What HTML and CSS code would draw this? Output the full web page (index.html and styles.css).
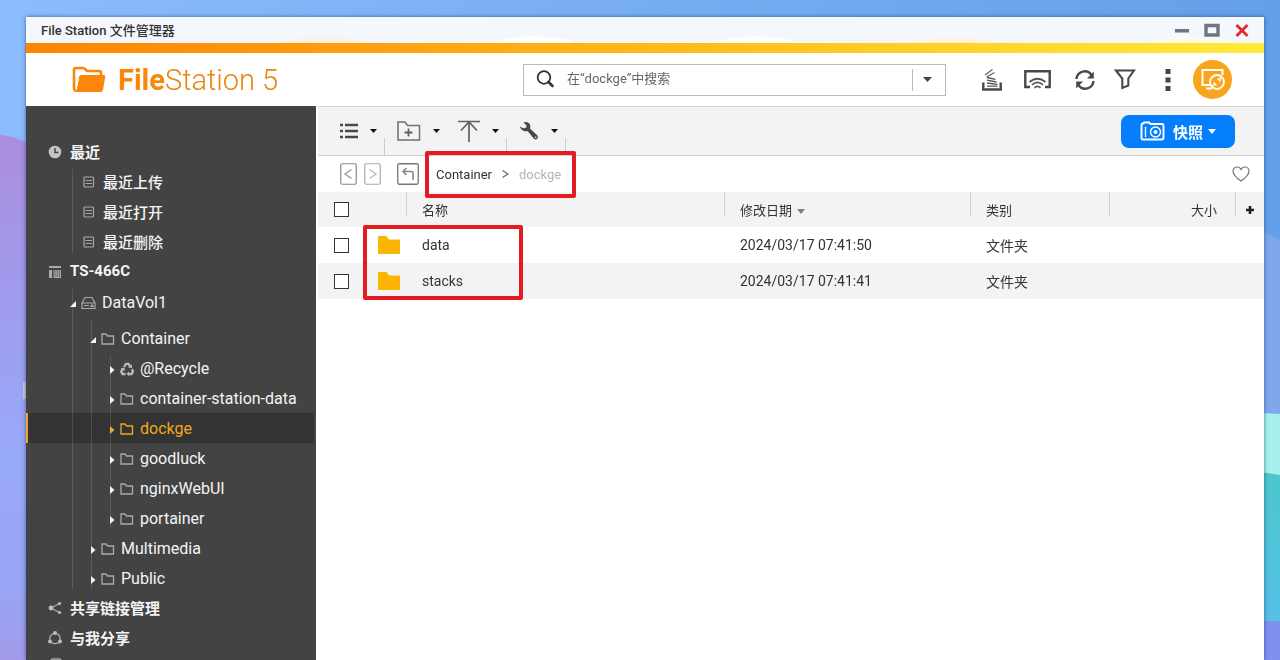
FILE: index.html
```html
<!DOCTYPE html>
<html lang="zh-CN">
<head>
<meta charset="utf-8">
<title>File Station 文件管理器</title>
<link rel="stylesheet" href="styles.css">
</head>
<body>
<svg class="wallpaper" viewBox="0 0 1280 660" preserveAspectRatio="none" aria-hidden="true">
  <defs>
    <linearGradient id="sky"><stop offset="0" stop-color="#8bbcfb"/><stop offset="1" stop-color="#649fe9"/></linearGradient>
    <linearGradient id="violet" x1="0" y1="0" x2="0" y2="1"><stop offset="0" stop-color="#ab8ddd"/><stop offset=".3" stop-color="#a09bed"/><stop offset=".6" stop-color="#98a9f8"/><stop offset=".85" stop-color="#97a6f5"/><stop offset="1" stop-color="#a39bea"/></linearGradient>
    <linearGradient id="teal" x1="0" y1="0" x2="0" y2="1"><stop offset="0" stop-color="#4cc7cb"/><stop offset="1" stop-color="#55c0e8"/></linearGradient>
  </defs>
  <rect width="1280" height="660" fill="url(#sky)"/>
  <path d="M0 135Q14 136 30 144V660H0z" fill="url(#violet)"/>
  <path d="M1260 230L1280 240V420H1260z" fill="#7ea8e9"/>
  <path d="M1260 413L1280 414V480H1260z" fill="#a6f0ee"/>
  <path d="M1260 472L1280 475V630H1260z" fill="url(#teal)"/>
  <path d="M1260 621H1280V660H1260z" fill="#8090ec"/>
  <path d="M23 382H26V399H23z" fill="#c8cbd8"/>
</svg>

<div class="window">
  <header class="titlebar">
    <span class="titlebar-text">File Station 文件管理器</span>
    <div class="window-controls">
      <button class="icon-button" aria-label="最小化"><svg width="14" height="14" viewBox="0 0 14 14"><path d="M0 6h14v3.500H0z" fill="#6d757d"/></svg></button>
      <button class="icon-button" aria-label="最大化"><svg width="16" height="14" viewBox="0 0 16 14"><path d="M2 2.500h12v9.500H2z" fill="none" stroke="#6d757d" stroke-width="3.400"/></svg></button>
      <button class="icon-button" aria-label="关闭"><svg width="14" height="14" viewBox="0 0 14 14"><path d="M1.500 2l11 11M12.500 2l-11 11" stroke="#e42a2a" stroke-width="2.800"/></svg></button>
    </div>
  </header>
  <div class="stripe"></div>

  <div class="app-header">
    <h1 class="brand">
      <svg width="34" height="28" viewBox="0 0 34 28"><path d="M4.500 24.500Q2 25 2 22V4Q2 2 4 2H11Q12.500 2 13.500 3.500L15 5H27Q29 5 29 7V9" fill="none" stroke="#fb8609" stroke-width="2.600"/><path d="M4.500 25L7 10.500Q7.500 9 9 9H31.500Q33.500 9 33.200 11L31 24Q30.500 26 28.500 26H4Q2 26 2 24z" fill="#fb8609"/><path d="M5 20L6.600 9.500Q7 7.600 9 7.600H28" fill="none" stroke="#fff" stroke-width="1.300"/></svg>
      <span><b>File</b>Station 5</span>
    </h1>
    <div class="search">
      <svg width="19" height="19" viewBox="0 0 19 19"><circle cx="8" cy="7.500" r="6.300" fill="none" stroke="#333" stroke-width="1.800"/><path d="M12.500 12L16.500 16" stroke="#333" stroke-width="2.600" stroke-linecap="round"/></svg>
      <input class="search-input" type="text" aria-label="搜索" placeholder="在“dockge”中搜索">
      <button class="search-more" aria-label="搜索选项"><svg width="9" height="5" viewBox="0 0 9 5"><path d="M0 0h9L4.500 5z" fill="#444"/></svg></button>
    </div>
    <div class="header-actions">
      <button class="icon-button" aria-label="后台任务"><svg width="20" height="24" viewBox="0 0 20 24"><path d="M1.300 14.500V21.500H18.700V14.500" fill="none" stroke="#484848" stroke-width="2.400"/><path d="M5 18.200H15.500M5 15L15.500 16.300M5 12.200L14.500 14M5 9.500L13.500 11.300" stroke="#555" stroke-width="1.300"/><path d="M3 7L10.500 1.500M4.500 9L12.500 4.500" stroke="#666" stroke-width="1.300"/></svg></button>
      <button class="icon-button" aria-label="投放"><svg width="27" height="19" viewBox="0 0 27 19"><path d="M6 17H1.300V1.300H25.700V17H21" fill="none" stroke="#484848" stroke-width="2.400"/><path d="M5.500 12Q13.500 5.500 21.500 12M8 14.800Q13.500 10 19 14.800M10.500 17.800Q13.500 14.800 16.500 17.800" fill="none" stroke="#555" stroke-width="1.700"/></svg></button>
      <button class="icon-button refresh" aria-label="刷新"><svg width="20" height="20" viewBox="0 0 20 20"><path d="M1.500 9A8.200 8.200 0 0 1 16.500 5M18.500 11A8.200 8.200 0 0 1 3.500 15" fill="none" stroke="#484848" stroke-width="2.400"/><path d="M18.800 1.500V8.500H12zM1.200 18.500V11.500H8z" fill="#484848"/></svg></button>
      <button class="icon-button" aria-label="筛选"><svg width="22" height="21" viewBox="0 0 22 21"><path d="M2 1.500H20L14.300 9.500V16.500L8.300 19V9.500z" fill="none" stroke="#484848" stroke-width="2.100"/></svg></button>
      <button class="icon-button more" aria-label="更多"><svg width="6" height="22" viewBox="0 0 6 22"><path d="M.5 0h5v5h-5zM.5 8.500h5v5h-5zM.5 17h5v5h-5z" fill="#444"/></svg></button>
      <button class="remote-button" aria-label="远程装载"><svg width="26" height="24" viewBox="0 0 26 24"><path d="M11 17H2.500V2H22.500V7M6 20.500H12" fill="none" stroke="#fff" stroke-width="2"/><circle cx="17" cy="14" r="7" fill="#f8a51b" stroke="#fff" stroke-width="1.900"/><path d="M12.500 18.500L15.500 15.500M21.500 9.500L18.500 12.500M13.500 14.500L16.500 17.500M17.500 10.500L20.500 13.500" fill="none" stroke="#fff" stroke-width="1.400"/></svg></button>
    </div>
  </div>

  <div class="workspace">
    <nav class="sidebar" aria-label="文件夹">
      <svg class="sprites" aria-hidden="true">
        <symbol id="file" viewBox="0 0 12 12"><rect x="1" y="1" width="9.500" height="10" rx="1" fill="none" stroke="#a8a8a8" stroke-width="1.200"/><path d="M2.500 4.500h6.500M2.500 7.500h6.500" stroke="#a8a8a8" stroke-width="1.200"/></symbol>
        <symbol id="folder" viewBox="0 0 14 12"><path d="M1 1H5L6.500 3H12.500V11H1z" fill="none" stroke="currentColor" stroke-width="1.300"/></symbol>
        <symbol id="shut" viewBox="0 0 6 8"><path d="M1 0L5.500 4L1 8z" fill="currentColor"/></symbol>
        <symbol id="open" viewBox="0 0 6 8"><path d="M6 1V7H0z" fill="currentColor"/></symbol>
      </svg>
      <ul class="tree">
        <li>
          <a class="node root" href="#"><svg width="14" height="14" viewBox="0 0 14 14"><circle cx="7" cy="7" r="6.300" fill="#c4c4c4"/><path d="M7 3V7.500H10.500" fill="none" stroke="#444" stroke-width="1.500"/></svg>最近</a>
          <ul class="level-1 recent">
            <li><a class="node" href="#"><svg width="12" height="12"><use href="#file"/></svg>最近上传</a></li>
            <li><a class="node" href="#"><svg width="12" height="12"><use href="#file"/></svg>最近打开</a></li>
            <li><a class="node" href="#"><svg width="12" height="12"><use href="#file"/></svg>最近删除</a></li>
          </ul>
        </li>
        <li>
          <a class="node root" href="#"><svg width="14" height="14" viewBox="0 0 14 14"><path d="M1 1h12v2H1zM1 5h3v8H1zM5.500 5H13v8H5.500z" fill="#aaa"/><path d="M7 5v7M9.200 5v7M11.400 5v7" stroke="#555" stroke-width=".8"/></svg>TS-466C</a>
          <ul class="level-1 volumes">
            <li>
              <a class="node" href="#"><svg class="arrow" width="6" height="8"><use href="#open"/></svg><svg width="15" height="14" viewBox="0 0 15 14"><path d="M1 7L4 1.500H11L14 7V12.500H1zM1 7H14" fill="none" stroke="#aaa" stroke-width="1.200"/><path d="M3 9.500h5M11 8.500l1.500 2h-3z" stroke="#aaa" fill="#aaa"/></svg>DataVol1</a>
              <ul class="level-2">
                <li>
                  <a class="node" href="#"><svg class="arrow" width="6" height="8"><use href="#open"/></svg><svg width="14" height="12"><use href="#folder"/></svg>Container</a>
                  <ul class="level-3">
                    <li><a class="node" href="#"><svg class="arrow" width="6" height="8"><use href="#shut"/></svg><svg width="14" height="14" viewBox="0 0 14 14"><path d="M4 5L6 1.800H8.500L10 4.500M12 7L13 9.500L11.500 12H8.500M5.500 12H2.500L1.200 9.500L3 6.500" fill="none" stroke="#bbb" stroke-width="2.300"/><path d="M8 5.500L12 6L12 2.500zM9 9.500V14L6.500 11.800zM.5 6.500L4.500 5.500L5 9z" fill="#bbb"/></svg>@Recycle</a></li>
                    <li><a class="node" href="#"><svg class="arrow" width="6" height="8"><use href="#shut"/></svg><svg width="14" height="12"><use href="#folder"/></svg>container-station-data</a></li>
                    <li><a class="node selected" href="#" aria-current="page"><svg class="arrow" width="6" height="8"><use href="#shut"/></svg><svg width="14" height="12"><use href="#folder"/></svg>dockge</a></li>
                    <li><a class="node" href="#"><svg class="arrow" width="6" height="8"><use href="#shut"/></svg><svg width="14" height="12"><use href="#folder"/></svg>goodluck</a></li>
                    <li><a class="node" href="#"><svg class="arrow" width="6" height="8"><use href="#shut"/></svg><svg width="14" height="12"><use href="#folder"/></svg>nginxWebUI</a></li>
                    <li><a class="node" href="#"><svg class="arrow" width="6" height="8"><use href="#shut"/></svg><svg width="14" height="12"><use href="#folder"/></svg>portainer</a></li>
                  </ul>
                </li>
                <li><a class="node" href="#"><svg class="arrow" width="6" height="8"><use href="#shut"/></svg><svg width="14" height="12"><use href="#folder"/></svg>Multimedia</a></li>
                <li><a class="node" href="#"><svg class="arrow" width="6" height="8"><use href="#shut"/></svg><svg width="14" height="12"><use href="#folder"/></svg>Public</a></li>
              </ul>
            </li>
          </ul>
        </li>
        <li><a class="node root" href="#"><svg width="14" height="14" viewBox="0 0 14 14"><path d="M11.500 2.500L3 7L11.500 11.500" fill="none" stroke="#aaa" stroke-width="1.300"/><circle cx="3" cy="7" r="2.400" fill="#bbb"/><circle cx="11.500" cy="2.500" r="1.600" fill="#bbb"/><circle cx="11.500" cy="11.500" r="1.600" fill="#bbb"/></svg>共享链接管理</a></li>
        <li><a class="node root" href="#"><svg width="14" height="14" viewBox="0 0 14 14"><circle cx="7" cy="7.500" r="5.200" fill="none" stroke="#aaa" stroke-width="1.300"/><circle cx="7" cy="2" r="2" fill="#bbb"/><circle cx="2" cy="10.500" r="2" fill="#bbb"/><circle cx="12" cy="10.500" r="2" fill="#bbb"/></svg>与我分享</a></li>
        <li><a class="node root" href="#" aria-label="更多"><svg width="14" height="20" viewBox="0 0 14 20"><rect x="3" y="1" width="10" height="17" rx="2" fill="none" stroke="#aaa" stroke-width="1.500"/></svg></a></li>
      </ul>
    </nav>

    <main class="content">
      <div class="toolbar">
        <button class="tool" aria-label="视图"><svg width="18" height="16" viewBox="0 0 18 16"><path d="M0 2h3M5 2h13M0 8h3M5 8h13M0 14h3M5 14h13" stroke="#484848" stroke-width="2.600"/></svg><svg class="caret" width="7" height="4" viewBox="0 0 7 4"><path d="M0 0h7L3.500 4z"/></svg></button>
        <span class="divider"></span>
        <button class="tool" aria-label="新建文件夹"><svg width="24" height="20" viewBox="0 0 24 20"><path d="M1 19V1H8L10.500 4.500H22.500V19z" fill="none" stroke="#707070" stroke-width="1.500"/><path d="M11.500 7.500v8M7.500 11.500h8" stroke="#606060" stroke-width="1.800"/></svg><svg class="caret" width="7" height="4" viewBox="0 0 7 4"><path d="M0 0h7L3.500 4z"/></svg></button>
        <button class="tool" aria-label="上传"><svg width="22" height="22" viewBox="1 0 22 22"><path d="M1 1.500H23M12 2V22M4 10.500L12 2L20 10.500" fill="none" stroke="#606060" stroke-width="1.700"/></svg><svg class="caret" width="7" height="4" viewBox="0 0 7 4"><path d="M0 0h7L3.500 4z"/></svg></button>
        <span class="divider"></span>
        <button class="tool" aria-label="工具"><svg width="20" height="20" viewBox="0 0 20 20"><path d="M6.500 1Q10.500 1 11.300 4.500Q11.500 6 11 7.500L18.500 14.500Q19.500 16 18.500 17.500Q17 19.200 15.200 18L8.500 10Q7 10.500 5 10Q1.500 8.800 1 5.500L4.500 7.500L7.300 6.500L7.500 4.500L4.500 1.500z" fill="#484848"/><circle cx="16.700" cy="16.300" r=".8" fill="#f3f3f3"/></svg><svg class="caret" width="7" height="4" viewBox="0 0 7 4"><path d="M0 0h7L3.500 4z"/></svg></button>
        <span class="divider"></span>
        <button class="snapshot"><svg width="25" height="20" viewBox="0 0 25 20"><path d="M3 2.500L4 1.500H9L10.500 3H22Q23.500 3 23.500 4.500V17Q23.500 18.500 22 18.500H3Q1.500 18.500 1.500 17V4Q1.500 2.500 3 2.500z" fill="none" stroke="#fff" stroke-width="1.900"/><path d="M5.500 6V16" stroke="#fff" stroke-width="1.400"/><circle cx="15.500" cy="11" r="5" fill="none" stroke="#fff" stroke-width="1.400"/><circle cx="15.500" cy="11" r="2" fill="#fff"/></svg>快照<svg width="8" height="5" viewBox="0 0 8 5"><path d="M0 0h8L4 5z" fill="#fff"/></svg></button>
      </div>

      <div class="pathbar">
        <button class="icon-button" aria-label="后退"><svg width="17" height="22" viewBox="0 0 17 22"><rect x=".75" y=".75" width="15.500" height="20.500" rx="1.500" fill="none" stroke="#888" stroke-width="1.200"/><path d="M11.500 6.500L5 11L11.500 15.500" fill="none" stroke="#999" stroke-width="1.400"/></svg></button>
        <button class="icon-button" aria-label="前进"><svg width="17" height="22" viewBox="0 0 17 22"><rect x=".75" y=".75" width="15.500" height="20.500" rx="1.500" fill="none" stroke="#aaa" stroke-width="1.200"/><path d="M5.500 6.500L12 11L5.500 15.500" fill="none" stroke="#bbb" stroke-width="1.400"/></svg></button>
        <button class="icon-button up" aria-label="上一级"><svg width="22" height="22" viewBox="0 0 22 22"><rect x=".75" y=".75" width="20.500" height="20.500" rx="1.500" fill="none" stroke="#777" stroke-width="1.300"/><path d="M16 17V10Q16 8.500 14.500 8.500H6M9.500 5L6 8.500L9.500 12" fill="none" stroke="#888" stroke-width="1.600"/></svg></button>
        <div class="breadcrumb"><a href="#">Container</a><svg width="7" height="8" viewBox="0 0 7 8"><path d="M.5.500L6 4L.5 7.500" fill="none" stroke="#666" stroke-width="1.200"/></svg><span class="here">dockge</span></div>
        <button class="icon-button favorite" aria-label="收藏"><svg width="18" height="16" viewBox="0 0 18 16"><path d="M9 15C4 11.500 1 8.500 1 5.200C1 2.500 3 1 5 1C7 1 8.300 2 9 3.500C9.700 2 11 1 13 1C15 1 17 2.500 17 5.200C17 8.500 14 11.500 9 15z" fill="none" stroke="#777" stroke-width="1.200"/></svg></button>
      </div>

      <div class="listing">
        <table class="files">
          <colgroup><col class="col-check"><col class="col-icon"><col><col class="col-date"><col class="col-type"><col class="col-size"><col class="col-add"></colgroup>
          <thead>
            <tr>
              <th><input class="tick" type="checkbox" aria-label="全选"></th>
              <th></th>
              <th class="edge">名称</th>
              <th class="edge">修改日期<svg class="sort" width="8" height="5" viewBox="0 0 8 5"><path d="M0 0h8L4 5z" fill="#808080"/></svg></th>
              <th class="edge">类别</th>
              <th class="edge size">大小</th>
              <th class="edge add"><button class="icon-button" aria-label="添加列"><svg width="8" height="8" viewBox="0 0 8 8"><path d="M4 0v8M0 4h8" stroke="#222" stroke-width="2.600"/></svg></button></th>
            </tr>
          </thead>
          <tbody>
            <tr>
              <td><input class="tick" type="checkbox" aria-label="data"></td>
              <td><svg width="22" height="18" viewBox="0 0 22 18"><path d="M0 1Q0 0 1 0H8.500L11 3.500H21Q22 3.500 22 4.500V17Q22 18 21 18H1Q0 18 0 17z" fill="#fdb503"/></svg></td>
              <td>data</td><td>2024/03/17 07:41:50</td><td>文件夹</td><td></td><td></td>
            </tr>
            <tr>
              <td><input class="tick" type="checkbox" aria-label="stacks"></td>
              <td><svg width="22" height="18" viewBox="0 0 22 18"><path d="M0 1Q0 0 1 0H8.500L11 3.500H21Q22 3.500 22 4.500V17Q22 18 21 18H1Q0 18 0 17z" fill="#fdb503"/></svg></td>
              <td>stacks</td><td>2024/03/17 07:41:41</td><td>文件夹</td><td></td><td></td>
            </tr>
          </tbody>
        </table>
        <div class="highlight"></div>
      </div>
    </main>
  </div>
</div>
</body>
</html>
```
FILE: styles.css
```css
* { box-sizing: border-box; }

body {
  margin: 0;
  height: 100vh;
  overflow: hidden;
  padding: 17px 16px 0 26px;
  font-family: Roboto, "Noto Sans CJK SC", sans-serif;
  font-size: 14px;
  color: #333;
}

button, input { font: inherit; color: inherit; }
button { border: 0; padding: 0; background: none; cursor: pointer; }
svg { display: block; flex: none; }
a { color: inherit; text-decoration: none; }

.wallpaper {
  position: fixed;
  inset: 0;
  width: 100%;
  height: 100%;
  z-index: -1;
}

.window {
  display: flex;
  flex-direction: column;
  height: 100%;
  background: #fff;
  box-shadow: 0 0 4px rgba(20, 40, 90, 0.6);
}

.icon-button { display: flex; }

/* Title bar */
.titlebar {
  display: flex;
  align-items: center;
  justify-content: space-between;
  height: 26px;
  padding: 0 15px 1px 15px;
  background:
    radial-gradient(ellipse 40px 7px at 24% 100%, #fdf1e8 90%, transparent),
    radial-gradient(ellipse 40px 7px at 41% 100%, #fff 90%, transparent),
    radial-gradient(ellipse 40px 7px at 59% 100%, #fff 90%, transparent),
    radial-gradient(ellipse 40px 7px at 75% 100%, #fdf3e6 90%, transparent),
    radial-gradient(ellipse 40px 7px at 94% 100%, #fbfbec 90%, transparent),
    #f4f7fc;
}
.titlebar-text { font-size: 13px; font-weight: 500; }
.window-controls { display: flex; align-items: center; gap: 15px; }

.stripe {
  height: 10px;
  flex: none;
  background: linear-gradient(90deg, #ff8400, #ffa812 35%, #ffc823 65%, #ffea3a);
}

/* Header */
.app-header {
  display: flex;
  align-items: center;
  flex: none;
  height: 53px;
  padding: 0 32px 0 46px;
}
.brand {
  display: flex;
  align-items: center;
  gap: 12px;
  width: 451px;
  margin: 0;
  font-size: 29px;
  font-weight: 300;
  color: #e8860f;
}
.brand b { font-weight: 700; color: #fb8609; }

.search {
  display: flex;
  align-items: center;
  flex: 1;
  height: 32px;
  padding-left: 12px;
  border: 1px solid #bbb;
}
.search-input {
  flex: 1;
  min-width: 0;
  margin-left: 12px;
  padding: 0 0 2px;
  border: 0;
  outline: 0;
  background: none;
  font-size: 13px;
}
.search-input::placeholder { color: #666; opacity: 1; }
.search-more {
  display: flex;
  align-items: center;
  justify-content: center;
  width: 33px;
  height: 22px;
  padding-right: 4px;
  border-left: 1px solid #bbb;
}

.header-actions {
  display: flex;
  align-items: center;
  gap: 22px;
  margin-left: 36px;
}
.header-actions .refresh { margin: 0 -3px 0 2px; }
.header-actions .more { margin-left: 7px; }
.remote-button {
  display: flex;
  align-items: center;
  justify-content: center;
  width: 39px;
  height: 39px;
  border-radius: 50%;
  background: #f8a51b;
}

/* Sidebar */
.workspace { display: flex; flex: 1; min-height: 0; }
.sidebar {
  flex: none;
  width: 290px;
  padding-top: 31px;
  overflow: hidden;
  background: #434343;
  color: #f4f4f4;
  font-size: 16px;
}
.sprites { position: absolute; width: 0; height: 0; }
.tree, .tree ul { margin: 0; padding: 0; list-style: none; }
.tree ul { position: relative; }
.tree ul::before {
  content: "";
  position: absolute;
  z-index: 1;
  top: 2px;
  bottom: 4px;
  width: 1px;
  background: rgba(255, 255, 255, 0.12);
}
.tree .level-1::before { left: 46px; }
.tree .level-2::before { left: 65px; }
.tree .level-3::before { left: 84px; }
.tree .level-2 { padding-top: 6px; }

.node {
  display: flex;
  align-items: center;
  gap: 7px;
  height: 30px;
  padding-left: 57px;
  white-space: nowrap;
}
.node > svg { margin-top: 2px; color: #aaa; }
.node > .arrow { margin: 4px -1px 0 0; color: #f4f4f4; }
.root { gap: 8px; padding: 0 0 2px 22px; font-size: 15px; font-weight: 700; }
.recent .node { gap: 8px; padding-bottom: 2px; font-size: 15px; font-weight: 500; }
.volumes .node { gap: 6px; padding-left: 44px; }
.volumes .level-2 .node { padding-left: 64px; }
.volumes .level-3 .node { padding-left: 83px; }
.volumes .level-3 .selected {
  margin-right: 2px;
  padding-left: 81px;
  border-left: 2px solid #f0a32a;
  background: #333;
}
.selected, .selected > svg, .selected > .arrow { color: #f0a820; }

/* Toolbar */
.content { flex: 1; min-width: 0; padding-left: 2px; }
.toolbar {
  display: flex;
  align-items: center;
  gap: 12px;
  height: 50px;
  padding: 0 29px 0 22px;
  border-top: 1px solid #d6d6d6;
  border-bottom: 1px solid #d0d0d0;
  background: #f3f3f3;
}
.tool { display: flex; align-items: center; gap: 12px; }
.tool + .tool { margin-left: 6px; }
.caret { fill: #111; }
.divider {
  width: 1px;
  height: 17px;
  margin-left: -5px;
  align-self: flex-end;
  background: #ccc;
}
.snapshot {
  display: flex;
  align-items: center;
  justify-content: center;
  gap: 5px;
  width: 114px;
  height: 33px;
  margin-left: auto;
  border-radius: 8px;
  background: #047efc;
  color: #fff;
  font-size: 15px;
  font-weight: 700;
}
.snapshot svg:first-child { margin-right: 3px; }

/* Path bar */
.pathbar {
  display: flex;
  align-items: center;
  gap: 7px;
  height: 36px;
  padding: 0 14px 0 22px;
}
.up { margin-left: 9px; }
.breadcrumb {
  position: relative;
  z-index: 1;
  display: flex;
  align-items: center;
  gap: 10px;
  margin-left: 10px;
  font-size: 13px;
}
.breadcrumb::after {
  content: "";
  position: absolute;
  inset: -16px -15px -16px -11px;
  border: 4px solid #e31b23;
  border-radius: 2px;
  pointer-events: none;
}
.here { color: #b4b4b4; }
.favorite { margin-left: auto; }

/* File list */
.listing { position: relative; }
.files {
  width: 100%;
  table-layout: fixed;
  border-collapse: collapse;
}
.col-check { width: 44px; }
.col-icon { width: 44px; }
.col-date { width: 246px; }
.col-type { width: 139px; }
.col-size { width: 126px; }
.col-add { width: 29px; }
.files th, .files td {
  height: 36px;
  padding: 0 0 0 16px;
  text-align: left;
  font-weight: 400;
}
.files th { height: 35px; font-size: 13px; background: #f3f3f3; }
.files tbody tr:nth-child(even) { background: #f3f3f3; }
.files .edge {
  background: linear-gradient(#d2d2d2, #d2d2d2) 0 0 / 1px 24px no-repeat #f3f3f3;
}
.files .size { padding-right: 18px; text-align: right; }
.files .add { padding-left: 11px; }
.sort { display: inline-block; margin-left: 5px; vertical-align: 1px; }
.tick {
  display: block;
  appearance: none;
  width: 15px;
  height: 15px;
  margin: 0;
  border: 1px solid #333;
  background: #fff;
}
.highlight {
  position: absolute;
  top: 33px;
  left: 45px;
  width: 160px;
  height: 75px;
  border: 4px solid #e31b23;
  border-radius: 2px;
  pointer-events: none;
}
```
